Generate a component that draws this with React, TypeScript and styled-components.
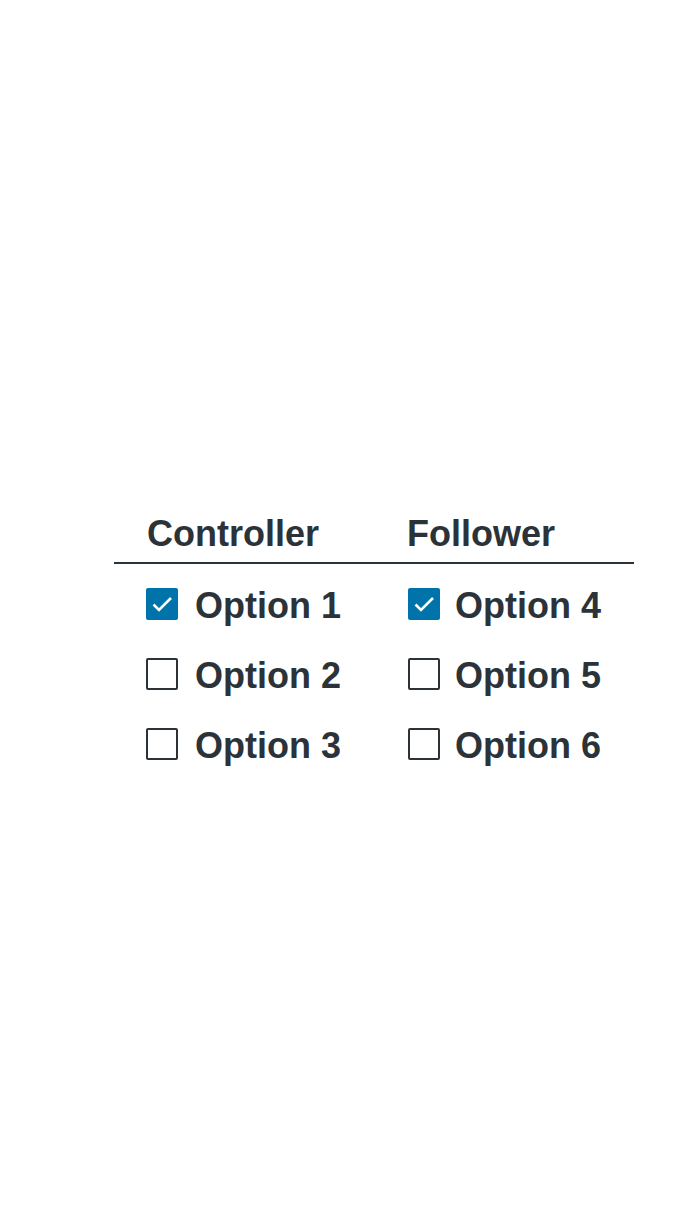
import React, { useState } from "react";
import styled, { createGlobalStyle } from "styled-components";

const Global = createGlobalStyle`
  html, body { margin: 0; padding: 0; background: #fff; }
  body { font-family: "Liberation Sans", Arial, sans-serif; color: #2c3338; }
`;

const Page = styled.div`
  padding: 516px 0 0 114px;
  min-height: 1208px;
  box-sizing: border-box;
`;

const Table = styled.div`
  width: 520px;
  display: grid;
  grid-template-columns: 260px 260px;
`;

const HeaderCell = styled.div`
  font-size: 36px;
  line-height: 36px;
  font-weight: 700;
  padding: 0 0 10px 33px;
  border-bottom: 2px solid #2c3338;
`;

const Cell = styled.label<{ $first?: boolean; $second?: boolean }>`
  display: flex;
  align-items: center;
  gap: ${(p) => (p.$second ? "15px" : "17px")};
  height: 70px;
  margin-top: ${(p) => (p.$first ? "4px" : "0")};
  padding-left: ${(p) => (p.$second ? "34px" : "32px")};
  font-size: 36px;
  font-weight: 700;
  cursor: pointer;
`;

const Text = styled.span`
  padding-top: 5px;
  line-height: 36px;
`;

const Box = styled.span<{ $checked: boolean }>`
  width: 32px;
  height: 32px;
  margin-top: 2px;
  box-sizing: border-box;
  border-radius: 2px;
  border: 2px solid ${(p) => (p.$checked ? "#0073aa" : "#2c3338")};
  background: ${(p) => (p.$checked ? "#0073aa" : "#fff")};
  display: flex;
  align-items: center;
  justify-content: center;
  flex-shrink: 0;
`;

const HiddenInput = styled.input`
  position: absolute;
  opacity: 0;
  width: 0;
  height: 0;
`;

function Check({
  label,
  initial,
  first,
  second,
}: {
  label: string;
  initial: boolean;
  first?: boolean;
  second?: boolean;
}) {
  const [on, setOn] = useState(initial);
  return (
    <Cell $first={first} $second={second}>
      <HiddenInput type="checkbox" checked={on} onChange={() => setOn(!on)} />
      <Box $checked={on}>
        {on && (
          <svg width="32" height="32" viewBox="0 0 32 32" style={{ margin: -2 }}>
            <path d="M7.5 16.5 L13 22 L25 10" fill="none" stroke="#fff" strokeWidth="2.6" />
          </svg>
        )}
      </Box>
      <Text>{label}</Text>
    </Cell>
  );
}

export default function App() {
  return (
    <>
      <Global />
      <Page>
        <Table>
          <HeaderCell>Controller</HeaderCell>
          <HeaderCell>Follower</HeaderCell>
          <Check label="Option 1" initial first />
          <Check label="Option 4" initial first second />
          <Check label="Option 2" initial={false} />
          <Check label="Option 5" initial={false} second />
          <Check label="Option 3" initial={false} />
          <Check label="Option 6" initial={false} second />
        </Table>
      </Page>
    </>
  );
}
